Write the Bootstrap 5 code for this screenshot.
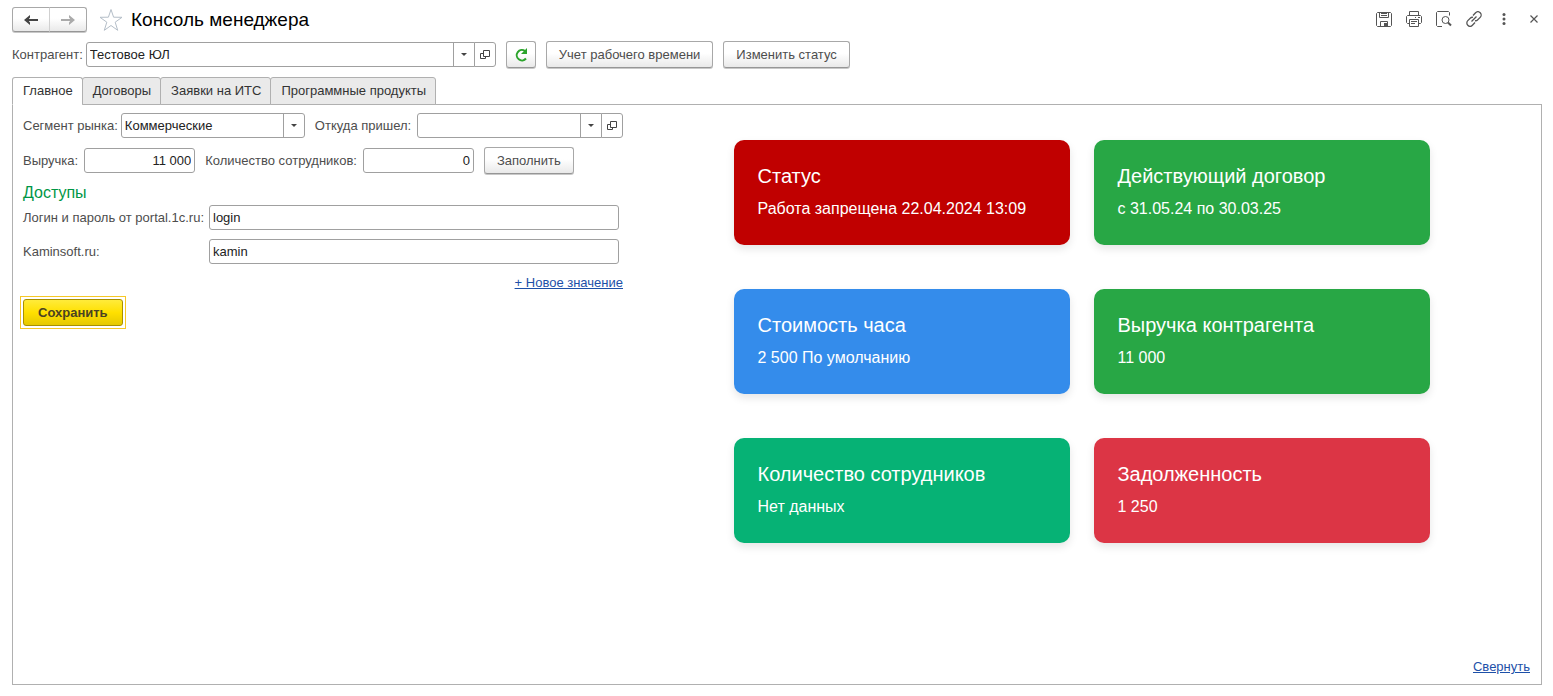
<!DOCTYPE html>
<html lang="ru">
<head>
<meta charset="utf-8">
<meta name="viewport" content="width=device-width, initial-scale=1">
<title>Консоль менеджера</title>
<link href="https://cdn.jsdelivr.net/npm/bootstrap@5.3.0/dist/css/bootstrap.min.css" rel="stylesheet">
<style>
  body { font: 13px/17px "Liberation Sans", Arial, sans-serif; color: #4d4d4d; background: #fff; }
  .console { padding: 7px 11px 11px 12px; }
  .console .btn { --bs-btn-font-size: 13px; --bs-btn-line-height: 17px; --bs-btn-padding-y: 4px; --bs-btn-padding-x: 12px; }
  .btn-soft { --bs-btn-color: #4d4d4d; --bs-btn-border-color: #a8a8a8; --bs-btn-hover-border-color: #888; --bs-btn-border-radius: 3px;
    background: linear-gradient(#fff 45%, #e9e9e9); border-bottom-color: #969696; box-shadow: 0 1px 0 #c8c8c8; }
  .console .nav-step { width: 38px; height: 25px; padding: 0; display: flex; align-items: center; justify-content: center; }
  .nav-step + .nav-step { border-left-color: #d0d0d0; }
  .console .icon-btn { width: 30px; height: 27px; padding: 0; display: flex; align-items: center; justify-content: center; }
  .page-title { font-size: 19px; line-height: 25px; color: #000; }
  .plain-btn { border: 0; background: none; padding: 0; display: flex; color: #555; }
  .tool-row { gap: 14px; padding-bottom: 2px; }
  .party-row { gap: 10px; padding: 9px 0; }
  .field { height: 25px; border: 1px solid #a0a0a0; border-radius: 3px; background: #fff; color: #222; padding: 0 3px; font-size: 13px; line-height: 23px; min-width: 0; }
  .field:focus { outline: 1px solid #e5bd00; }
  select.field { appearance: none; padding-right: 24px;
    background: #fff url("data:image/svg+xml,%3Csvg xmlns='http://www.w3.org/2000/svg' width='21' height='23'%3E%3Cpath d='M.5 0v23' stroke='%23a0a0a0'/%3E%3Cpath d='M8 10h6l-3 3z' fill='%23444'/%3E%3C/svg%3E") right top no-repeat; }
  .with-open select { border-radius: 3px 0 0 3px; }
  .open-btn { width: 22px; height: 25px; margin-left: -1px; padding: 0; border: 1px solid #a0a0a0; border-radius: 0 3px 3px 0; background: #fff; display: flex; align-items: center; justify-content: center; }
  .w-party { width: 389px; }
  .w-segment { width: 184px; }
  .w-num { width: 111px; text-align: right; }
  .form-side { width: 610px; padding-right: 10px; }
  .field-row { display: flex; align-items: center; gap: 10px; }
  .field-row + .field-row { margin-top: 9px; }
  .pair { display: flex; align-items: center; gap: 6px; }
  .pair-tight { gap: 3px; }
  .access { display: grid; grid-template-columns: 180px 410px; column-gap: 6px; row-gap: 9px; align-items: center; }
  .section-head { font-size: 16px; line-height: 20px; color: #009646; margin: 9px 0 2px; }
  .text-link { color: #1d50a8; }
  .add-row { margin: 10px 0 5px; text-align: right; }
  .save-ring { display: inline-block; border: 1px solid #f6c827; padding: 2px; margin-left: -3px; }
  .console .btn-save { --bs-btn-padding-x: 14px; --bs-btn-border-color: #a89000; --bs-btn-hover-border-color: #8d7a00; --bs-btn-border-radius: 3px;
    display: block; background: linear-gradient(#ffeb3b, #ffe000 50%, #e6c900); color: #4a4322; font-weight: 700; }
  .console .nav-tabs { --bs-nav-tabs-border-color: #b0b0b0; --bs-nav-tabs-border-radius: 3px; border-bottom: 0; margin-bottom: -1px; position: relative; }
  .console .nav-tabs .nav-link { height: 28px; margin: 0 0 0 -1px; padding: 4px 9px 5px 10px; border: 1px solid #b0b0b0; background: #eaeaea; color: #333; }
  .console .nav-tabs .nav-item:first-child .nav-link { margin-left: 0; }
  .console .nav-tabs .nav-link.active { background: #fff; border-bottom-color: #fff; }
  .pane { border: 1px solid #b0b0b0; padding: 8px 11px 9px 10px; }
  .tiles { display: grid; grid-template-columns: 1fr 1fr; gap: 44px 24px; max-width: 696px; margin: 27px auto; }
  .tile { border-radius: 10px; padding: 24px; color: #fff; box-shadow: 0 4px 8px rgba(0,0,0,.1); }
  .tile h2 { font-size: 20px; line-height: 24px; margin: 0 0 9px; }
  .tile p { font-size: 16px; line-height: 24px; margin: 0; }
  .t-red { background: #c00000; }
  .t-green { background: #28a745; }
  .t-blue { background: #348ceb; }
  .t-teal { background: #06b275; }
  .t-rose { background: #dc3545; }
</style>
</head>
<body>
<div class="console d-flex flex-column min-vh-100">
  <header class="d-flex align-items-center">
    <div class="btn-group">
      <button class="btn btn-soft nav-step" type="button" aria-label="Назад"><svg width="14" height="10" viewBox="0 0 14 10" fill="none" stroke="#444" stroke-width="2"><path d="M14 5H2"/><path d="M6 0v2.500L4 5l2 2.500V10L0 5z" fill="#444" stroke="none"/></svg></button>
      <button class="btn btn-soft nav-step" type="button" aria-label="Вперёд"><svg width="14" height="10" viewBox="0 0 14 10" fill="none" stroke="#aaa" stroke-width="2"><path d="M0 5h12"/><path d="M8 0v2.500L10 5 8 7.500V10l6-5z" fill="#aaa" stroke="none"/></svg></button>
    </div>
    <button class="plain-btn ms-2 ps-1" type="button" aria-label="В избранное"><svg width="24" height="24" viewBox="0 0 24 24" fill="none" stroke="#b4bec8"><path d="m12 1.500 2.600 7.700 8.400.1-6.800 4.900 2.500 8.100L12 17.500l-6.700 4.800 2.500-8.100L1 9.300l8.400-.1z"/></svg></button>
    <h1 class="page-title ms-2 mb-0 fw-normal">Консоль менеджера</h1>
    <div class="tool-row d-flex align-items-center ms-auto">
      <button class="plain-btn" type="button" aria-label="Сохранить"><svg width="16" height="16" viewBox="0 0 16 16" fill="none" stroke="#555"><path d="M1.500 1.500h13l1 1v12l-1 1h-13l-1-1v-12zM3.500 1.500v5h9v-5M5 2.500h6M5 4.500h6M4.500 15.500v-5h7v5"/><path d="M8 12h3v3H8z" fill="#555" stroke="none"/></svg></button>
      <button class="plain-btn" type="button" aria-label="Печать"><svg width="16" height="16" viewBox="0 0 16 16" fill="none" stroke="#555"><path d="M3.500 4.500v-4h9v4M3.500 12.500h-2l-1-1v-6l1-1h13l1 1v6l-1 1h-2M3.500 8.500h9v7h-9zM5 10.500h6M5 12.500h4M9 6.500h1M12 6.500h2"/></svg></button>
      <button class="plain-btn" type="button" aria-label="Предварительный просмотр"><svg width="16" height="16" viewBox="0 0 16 16" fill="none" stroke="#555"><path d="M6 15.500H1.500l-1-1v-13l1-1h11l1 1v3"/><circle cx="9.500" cy="9" r="3.500"/><path d="m12 11.500 3 3" stroke-width="2"/></svg></button>
      <button class="plain-btn" type="button" aria-label="Получить ссылку"><svg width="16" height="16" viewBox="0 0 16 16" fill="none" stroke="#555" stroke-width="1.300"><path d="m5.500 10.500 5-5M7 4.500l2.600-2.700a3.200 3.200 0 0 1 4.600 4.600L11.500 9c-.7.700-1.600.9-2.500.6M9 11.500l-2.600 2.700a3.200 3.200 0 0 1-4.600-4.600L4.500 7c.7-.7 1.600-.9 2.500-.6"/></svg></button>
      <button class="plain-btn" type="button" aria-label="Ещё"><svg width="16" height="16" viewBox="0 0 16 16" fill="#555"><circle cx="8" cy="3.500" r="1.500"/><circle cx="8" cy="8" r="1.500"/><circle cx="8" cy="12.500" r="1.500"/></svg></button>
      <button class="plain-btn" type="button" aria-label="Закрыть"><svg width="16" height="16" viewBox="0 0 16 16" stroke="#555" stroke-width="1.200"><path d="m4.500 4.500 7 7m0-7-7 7"/></svg></button>
    </div>
  </header>

  <div class="party-row d-flex align-items-center">
    <div class="pair pair-tight">
      <label for="party">Контрагент:</label>
      <div class="with-open d-flex">
        <select id="party" class="field w-party"><option>Тестовое ЮЛ</option></select>
        <button class="open-btn" type="button" aria-label="Открыть контрагента"><svg width="10" height="10" viewBox="0 0 10 10" fill="none" stroke="#444"><path d="M3.500.500h6v6h-6zM3 3.500H.5v5h5V7"/></svg></button>
      </div>
    </div>
    <button class="btn btn-soft icon-btn" type="button" aria-label="Обновить"><svg width="14" height="14" viewBox="0 0 14 14" fill="none" stroke="#2ca42c" stroke-width="2"><path d="M12 10.500A5.200 5.200 0 1 1 11 3"/><path d="M13 0v6H7z" fill="#2ca42c" stroke="none"/></svg></button>
    <button class="btn btn-soft" type="button">Учет рабочего времени</button>
    <button class="btn btn-soft" type="button">Изменить статус</button>
  </div>

  <ul class="nav nav-tabs">
    <li class="nav-item"><a class="nav-link active" href="#main">Главное</a></li>
    <li class="nav-item"><a class="nav-link" href="#contracts">Договоры</a></li>
    <li class="nav-item"><a class="nav-link" href="#its">Заявки на ИТС</a></li>
    <li class="nav-item"><a class="nav-link" href="#products">Программные продукты</a></li>
  </ul>

  <main id="main" class="pane flex-grow-1 d-flex flex-column">
    <div class="d-flex">
      <form class="form-side flex-shrink-0">
        <div class="field-row">
          <div class="pair pair-tight">
            <label for="segment">Сегмент рынка:</label>
            <select id="segment" class="field w-segment"><option>Коммерческие</option></select>
          </div>
          <div class="pair flex-grow-1">
            <label for="source">Откуда пришел:</label>
            <div class="with-open d-flex flex-grow-1">
              <select id="source" class="field flex-grow-1"><option></option></select>
              <button class="open-btn" type="button" aria-label="Открыть источник"><svg width="10" height="10" viewBox="0 0 10 10" fill="none" stroke="#444"><path d="M3.500.500h6v6h-6zM3 3.500H.5v5h5V7"/></svg></button>
            </div>
          </div>
        </div>
        <div class="field-row">
          <div class="pair">
            <label for="revenue">Выручка:</label>
            <input id="revenue" class="field w-num" value="11 000">
          </div>
          <div class="pair">
            <label for="staff">Количество сотрудников:</label>
            <input id="staff" class="field w-num" value="0">
          </div>
          <button class="btn btn-soft" type="button">Заполнить</button>
        </div>
        <h2 class="section-head fw-normal">Доступы</h2>
        <div class="access">
          <label for="portal" class="text-nowrap">Логин и пароль от portal.1c.ru:</label>
          <input id="portal" class="field" value="login">
          <label for="kamin">Kaminsoft.ru:</label>
          <input id="kamin" class="field" value="kamin">
        </div>
        <div class="add-row"><a class="text-link" href="#new">+ Новое значение</a></div>
        <div class="save-ring"><button class="btn btn-save" type="submit">Сохранить</button></div>
      </form>
      <div class="flex-grow-1">
        <div class="tiles">
          <section class="tile t-red"><h2 class="fw-normal">Статус</h2><p>Работа запрещена 22.04.2024 13:09</p></section>
          <section class="tile t-green"><h2 class="fw-normal">Действующий договор</h2><p>с 31.05.24 по 30.03.25</p></section>
          <section class="tile t-blue"><h2 class="fw-normal">Стоимость часа</h2><p>2 500 По умолчанию</p></section>
          <section class="tile t-green"><h2 class="fw-normal">Выручка контрагента</h2><p>11 000</p></section>
          <section class="tile t-teal"><h2 class="fw-normal">Количество сотрудников</h2><p>Нет данных</p></section>
          <section class="tile t-rose"><h2 class="fw-normal">Задолженность</h2><p>1 250</p></section>
        </div>
      </div>
    </div>
    <div class="mt-auto text-end"><a class="text-link" href="#collapse">Свернуть</a></div>
  </main>
</div>
<script src="https://cdn.jsdelivr.net/npm/bootstrap@5.3.0/dist/js/bootstrap.bundle.min.js"></script>
</body>
</html>
